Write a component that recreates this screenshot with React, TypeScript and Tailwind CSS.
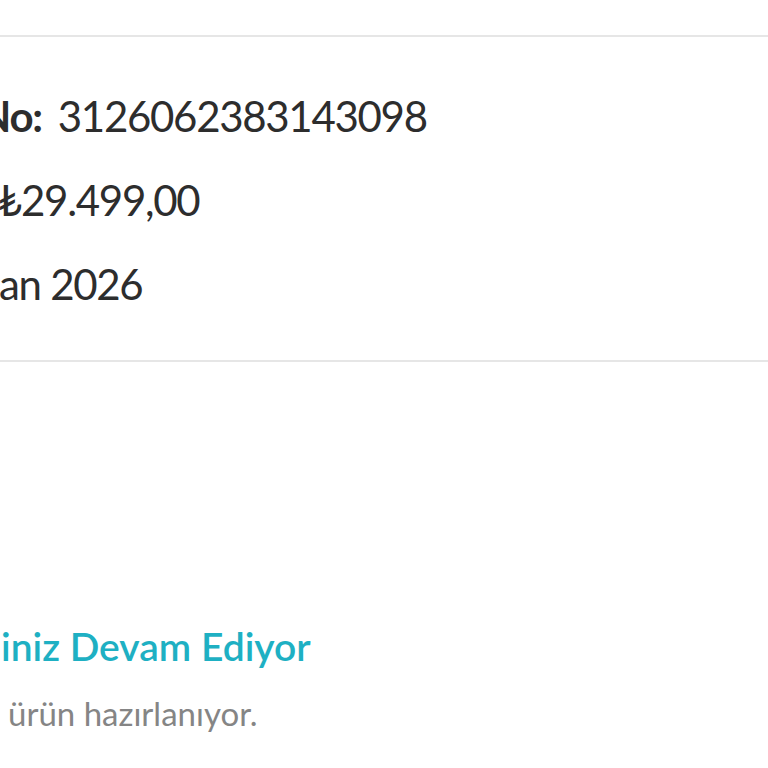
const rows = [
  { key: 'no', shift: 'ml-[-21px]', label: 'No:', value: '3126062383143098' },
  { key: 'amount', shift: 'ml-[-2px]', label: '', value: '₺29.499,00' },
  { key: 'date', shift: 'ml-[-1px]', label: '', value: 'an 2026' },
]

export default function App() {
  return (
    <div className="min-h-screen bg-white overflow-hidden font-['Lato',sans-serif] text-[#2d2d2d]">
      <div className="pt-[35px]">
        <section className="border-y-2 border-[#e6e6e6] pt-[37px] pb-[34px]">
          {rows.map(r => (
            <div key={r.key} className="h-[84px] flex items-center overflow-hidden">
              <div className={`${r.shift} whitespace-nowrap text-[42px] tracking-[-1.3px] leading-[84px]`}>
                {r.label && <span className="font-bold mr-[16px]">{r.label}</span>}
                {r.value}
              </div>
            </div>
          ))}
        </section>
        <div className="pt-[260px] overflow-hidden">
          <div className="whitespace-nowrap text-[39px] leading-[48px] font-semibold text-[#1eb0c3] ml-[1px]">
            iniz Devam Ediyor
          </div>
          <div className="mt-[23px] whitespace-nowrap text-[33px] leading-[40px] text-[#858585] ml-[8px]">
            ürün hazırlanıyor.
          </div>
        </div>
      </div>
    </div>
  )
}
